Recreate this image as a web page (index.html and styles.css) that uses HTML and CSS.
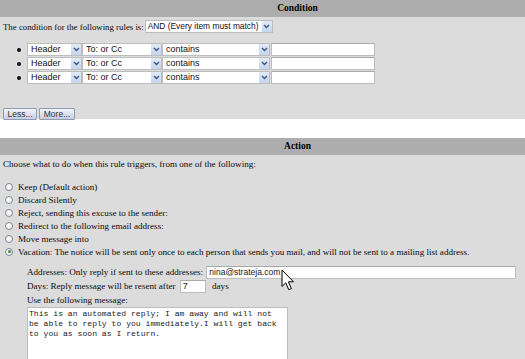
FILE: index.html
```html
<!DOCTYPE html>
<html>
<head>
<meta charset="utf-8">
<link rel="stylesheet" href="styles.css">
</head>
<body>
<div class="hdr">Condition</div>
<div class="cond">
  <div class="cond-line">
    <span>The condition for the following rules is:</span>
    <span class="sel w-and"><span class="val tight">AND (Every item must match)</span><span class="arr"><svg width="7" height="5" viewBox="0 0 7 5"><path d="M1 1 L3.5 3.5 L6 1" fill="none" stroke="#3d5480" stroke-width="1.4"/></svg></span></span>
  </div>
  <ul class="rules">
    <li>
      <span class="dot"></span>
      <span class="sel w-h"><span class="val">Header</span><span class="arr"><svg width="7" height="5" viewBox="0 0 7 5"><path d="M1 1 L3.5 3.5 L6 1" fill="none" stroke="#3d5480" stroke-width="1.4"/></svg></span></span>
      <span class="sel w-t"><span class="val">To: or Cc</span><span class="arr"><svg width="7" height="5" viewBox="0 0 7 5"><path d="M1 1 L3.5 3.5 L6 1" fill="none" stroke="#3d5480" stroke-width="1.4"/></svg></span></span>
      <span class="sel w-c"><span class="val">contains</span><span class="arr"><svg width="7" height="5" viewBox="0 0 7 5"><path d="M1 1 L3.5 3.5 L6 1" fill="none" stroke="#3d5480" stroke-width="1.4"/></svg></span></span>
      <span class="inp w-i"></span>
    </li>
    <li>
      <span class="dot"></span>
      <span class="sel w-h"><span class="val">Header</span><span class="arr"><svg width="7" height="5" viewBox="0 0 7 5"><path d="M1 1 L3.5 3.5 L6 1" fill="none" stroke="#3d5480" stroke-width="1.4"/></svg></span></span>
      <span class="sel w-t"><span class="val">To: or Cc</span><span class="arr"><svg width="7" height="5" viewBox="0 0 7 5"><path d="M1 1 L3.5 3.5 L6 1" fill="none" stroke="#3d5480" stroke-width="1.4"/></svg></span></span>
      <span class="sel w-c"><span class="val">contains</span><span class="arr"><svg width="7" height="5" viewBox="0 0 7 5"><path d="M1 1 L3.5 3.5 L6 1" fill="none" stroke="#3d5480" stroke-width="1.4"/></svg></span></span>
      <span class="inp w-i"></span>
    </li>
    <li>
      <span class="dot"></span>
      <span class="sel w-h"><span class="val">Header</span><span class="arr"><svg width="7" height="5" viewBox="0 0 7 5"><path d="M1 1 L3.5 3.5 L6 1" fill="none" stroke="#3d5480" stroke-width="1.4"/></svg></span></span>
      <span class="sel w-t"><span class="val">To: or Cc</span><span class="arr"><svg width="7" height="5" viewBox="0 0 7 5"><path d="M1 1 L3.5 3.5 L6 1" fill="none" stroke="#3d5480" stroke-width="1.4"/></svg></span></span>
      <span class="sel w-c"><span class="val">contains</span><span class="arr"><svg width="7" height="5" viewBox="0 0 7 5"><path d="M1 1 L3.5 3.5 L6 1" fill="none" stroke="#3d5480" stroke-width="1.4"/></svg></span></span>
      <span class="inp w-i"></span>
    </li>
  </ul>
  <div class="btns">
    <span class="btn b-less">Less...</span>
    <span class="btn b-more">More...</span>
  </div>
</div>
<div class="gap"></div>
<div class="hdr">Action</div>
<div class="act">
  <p class="intro">Choose what to do when this rule triggers, from one of the following:</p>
  <div class="opts">
    <div class="opt"><span class="radio"></span>Keep (Default action)</div>
    <div class="opt"><span class="radio"></span>Discard Silently</div>
    <div class="opt"><span class="radio"></span>Reject, sending this excuse to the sender:</div>
    <div class="opt"><span class="radio"></span>Redirect to the following email address:</div>
    <div class="opt"><span class="radio"></span>Move message into</div>
    <div class="opt"><span class="radio on"></span>Vacation: The notice will be sent only once to each person that sends you mail, and will not be sent to a mailing list address.</div>
  </div>
  <div class="vac">
    <div class="vline">Addresses: Only reply if sent to these addresses: <span class="inp w-addr">nina@strateja.com</span></div>
    <div class="vline">Days: Reply message will be resent after <span class="inp w-days">7</span> days</div>
    <div class="vline">Use the following message:</div>
    <div class="ta">This is an automated reply; I am away and will not
be able to reply to you immediately.I will get back
to you as soon as I return.</div>
  </div>
</div>
<svg class="cursor" width="14" height="23" viewBox="0 0 14 23"><path d="M1 1 L1 17.5 L4.8 13.8 L7.8 20.8 L10.4 19.7 L7.4 12.8 L12.5 12.8 Z" fill="#fff" stroke="#000" stroke-width="1" stroke-linejoin="round"/></svg>
</body>
</html>
```
FILE: styles.css
```css
html, body {
  margin: 0;
  padding: 0;
}
body {
  background: #dcdcdc;
  font-family: "Liberation Serif", "Times New Roman", serif;
  font-size: 9.1px;
  color: #0a0a0a;
  width: 525px;
  height: 359px;
  overflow: hidden;
  position: relative;
}
.hdr {
  background: #adadad;
  height: 17px;
  line-height: 17px;
  font-weight: bold;
  text-align: center;
  padding-left: 70px;
  font-size: 9.5px;
  color: #000;
}
.cond {
  padding: 3px 0 0 3px;
  height: 102px;
  box-sizing: border-box;
}
.cond-line {
  display: flex;
  align-items: center;
  gap: 1px;
  height: 13px;
  font-size: 8.8px;
}
.sel {
  display: inline-flex;
  align-items: stretch;
  height: 13px;
  box-sizing: border-box;
  border: 1px solid #bdbdbd;
  background: #fff;
  font-family: "Liberation Sans", Arial, sans-serif;
  font-size: 9px;
  color: #111;
}
.sel .val {
  flex: 1;
  padding-left: 3px;
  line-height: 11px;
  white-space: nowrap;
  overflow: hidden;
}
.sel .val.tight {
  font-size: 8.4px;
  padding-left: 2px;
}
.sel .arr {
  width: 10px;
  margin: 0;
  border-left: 1px solid #fff;
  background: linear-gradient(#e2eaf7, #c5d5ee);
  display: flex;
  align-items: center;
  justify-content: center;
}
.w-and { width: 128px; }
.w-h { width: 55px; }
.w-t { width: 80px; }
.w-c { width: 108px; }
.inp {
  display: inline-block;
  height: 13px;
  box-sizing: border-box;
  border: 1px solid #bdbdbd;
  border-top-color: #a9a9a9;
  background: #fff;
  font-family: "Liberation Sans", Arial, sans-serif;
  font-size: 9px;
  line-height: 11px;
  padding-left: 2px;
  color: #222;
}
.w-i { width: 104px; margin-left: 1px; }
.rules {
  list-style: none;
  margin: 10px 0 0 0;
  padding: 0 0 0 14px;
  display: flex;
  flex-direction: column;
  gap: 1px;
}
.rules li {
  display: flex;
  align-items: center;
  height: 13px;
}
.dot {
  width: 4px;
  height: 4px;
  border-radius: 50%;
  background: #111;
  margin-right: 6px;
}
.btns {
  display: flex;
  gap: 2px;
  margin-top: 24px;
}
.btn {
  display: inline-block;
  height: 12px;
  box-sizing: border-box;
  border: 1px solid #8f9bb3;
  border-radius: 1px;
  background: linear-gradient(#f4f6fa, #d6dded 60%, #c5cee2);
  font-family: "Liberation Sans", Arial, sans-serif;
  font-size: 8.5px;
  line-height: 10px;
  text-align: center;
  color: #333;
}
.b-less { width: 34px; }
.b-more { width: 36px; }
.gap {
  background: #fff;
  height: 19px;
}
.act {
  padding: 3px 0 0 3px;
}
.intro {
  margin: 0;
  line-height: 12px;
}
.opts {
  margin-top: 10px;
  display: flex;
  flex-direction: column;
}
.opt {
  display: flex;
  align-items: center;
  height: 13px;
  white-space: nowrap;
}
.radio {
  width: 8px;
  height: 8px;
  box-sizing: border-box;
  border-radius: 50%;
  border: 1px solid #7f8a99;
  background: radial-gradient(circle at 40% 40%, #fff, #e6e6e6);
  margin: 0 5px 0 2px;
  position: relative;
}
.radio.on::after {
  content: "";
  position: absolute;
  left: 1.5px;
  top: 1.5px;
  width: 3px;
  height: 3px;
  border-radius: 50%;
  background: #3d8a3a;
}
.vac {
  padding-left: 24px;
  margin-top: 7px;
}
.vline {
  display: flex;
  align-items: center;
  height: 14px;
  white-space: pre;
}
.w-addr { width: 310px; margin-left: 1px; font-size: 8.5px; }
.w-days { width: 26px; margin: 0 4px 0 2px; }
.ta {
  margin-top: 0;
  width: 261px;
  height: 60px;
  box-sizing: border-box;
  border: 1px solid #bdbdbd;
  background: #fff;
  font-family: "Liberation Mono", "Courier New", monospace;
  font-size: 8.1px;
  line-height: 9.8px;
  padding: 1px 1px;
  white-space: pre;
  color: #222;
}
.cursor {
  position: absolute;
  left: 281px;
  top: 269px;
}
```
